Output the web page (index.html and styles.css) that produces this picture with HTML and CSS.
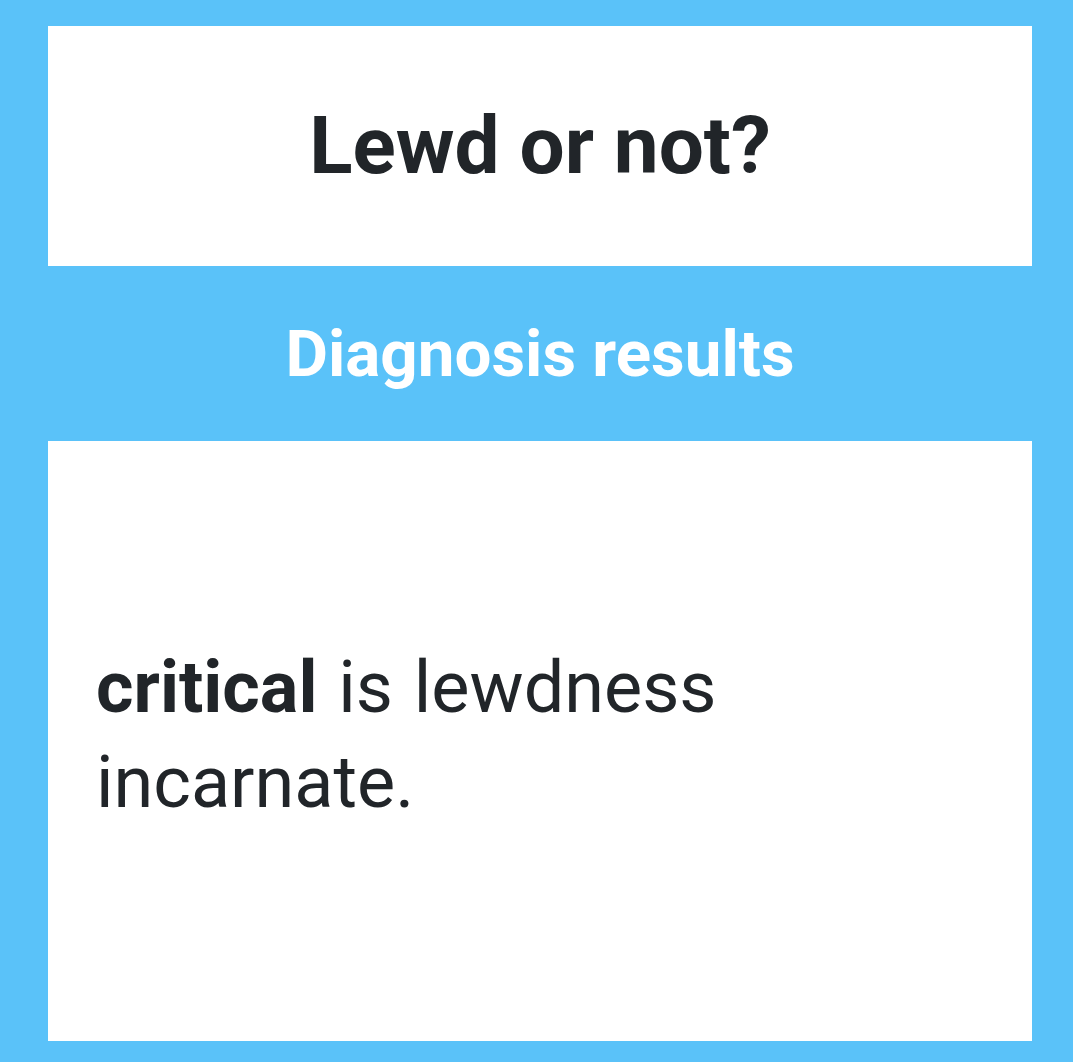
FILE: index.html
```html
<!DOCTYPE html>
<html lang="en">
<head>
  <meta charset="UTF-8" />
  <meta name="viewport" content="width=device-width, initial-scale=1.0" />
  <title>Lewd or not?</title>
  <link rel="stylesheet" href="styles.css">
</head>
<body>
  <div class="container">
    <div class="title-box">
      <h1>Lewd or not?</h1>
    </div>

    <div class="band">
      <h2>Diagnosis results</h2>
    </div>

    <div class="result-box">
      <p class="result"><strong>critical</strong> is lewdness incarnate.</p>
    </div>
  </div>
</body>
</html>
```

FILE: styles.css
```css
body {
  margin: 0;
  background-color: #5ac2f9;
  font-family: Roboto, "Noto Sans", sans-serif;
  color: #212529;
}
.container {
  width: 984px;
  margin-left: 48px;
  padding: 26px 0 21px;
}
.title-box {
  background-color: #fff;
  height: 240px;
  display: flex;
  align-items: center;
  justify-content: center;
}
h1 {
  margin: 0;
  font-size: 80px;
  font-weight: 700;
  line-height: 1;
}
.band {
  height: 175px;
  display: flex;
  align-items: center;
  justify-content: center;
}
h2 {
  margin: 0;
  color: #fff;
  font-size: 65.5px;
  font-weight: 700;
  line-height: 1;
}
.result-box {
  background-color: #fff;
  height: 600px;
  display: flex;
  align-items: center;
  padding: 0 48px 12px;
  box-sizing: border-box;
}
.result {
  margin: 0;
  width: 660px;
  font-size: 72px;
  line-height: 95px;
  font-weight: 400;
  word-spacing: 3px;
}
.result strong {
  font-weight: 700;
}
```
